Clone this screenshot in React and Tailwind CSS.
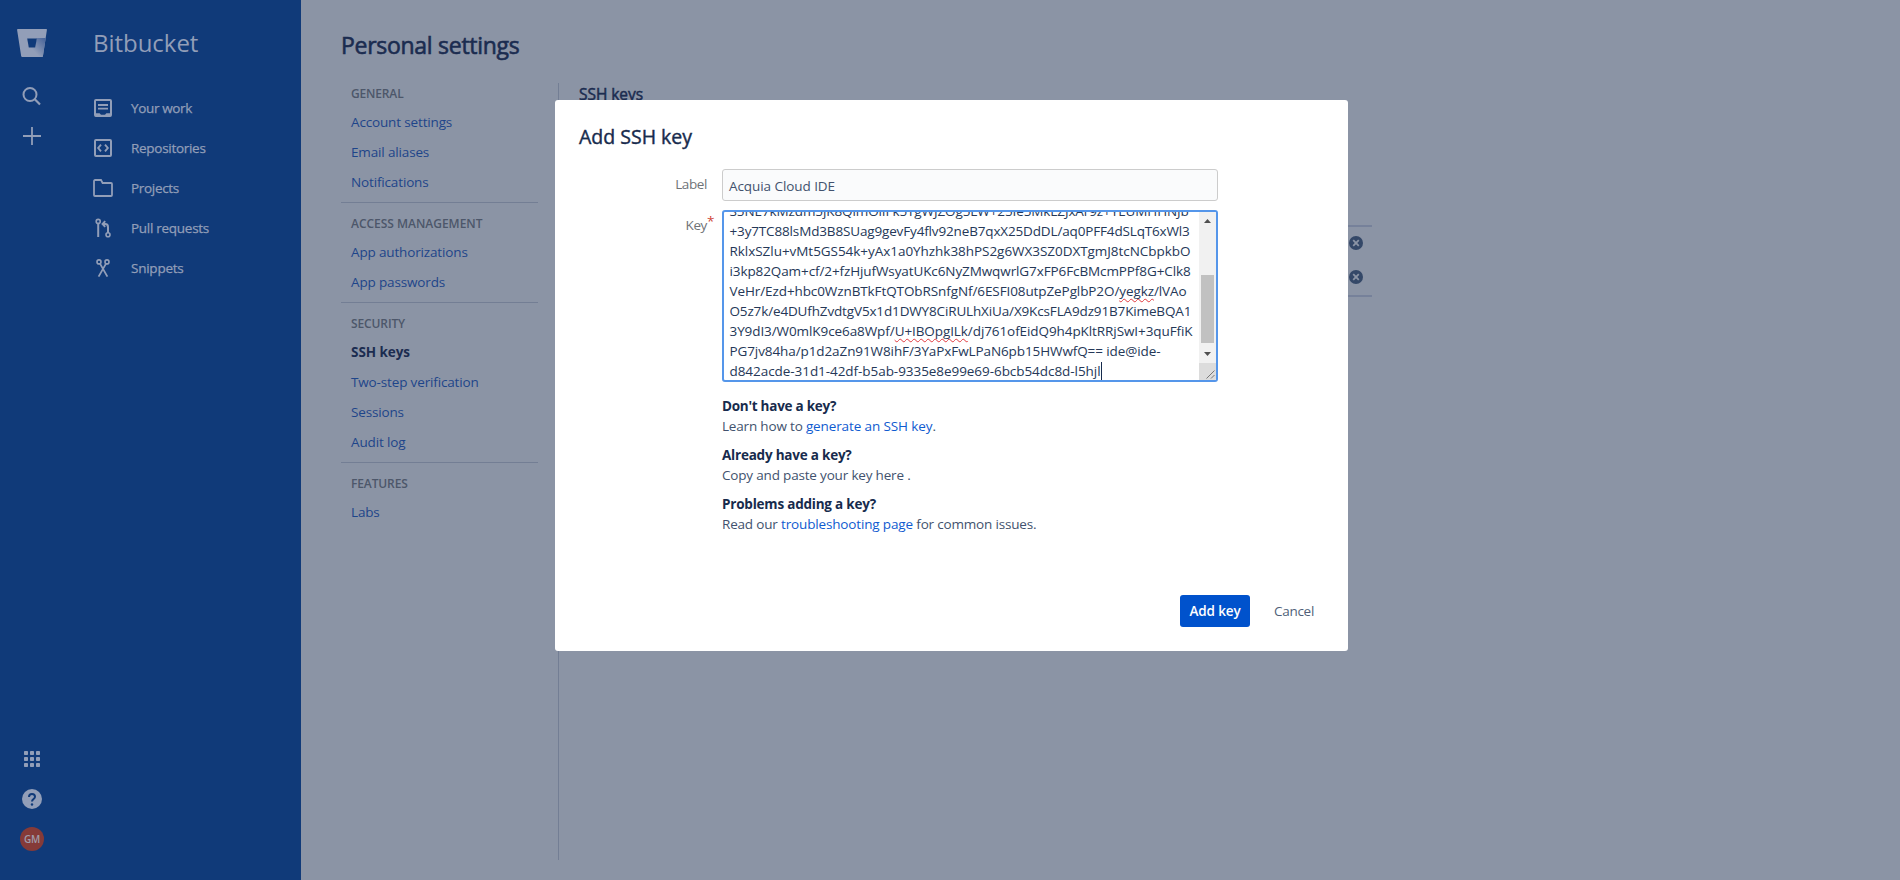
import React from "react";

function Icon({ children, className = "", size = 24 }) {
  return (
    <svg width={size} height={size} viewBox="0 0 24 24" fill="none" stroke="currentColor" strokeWidth="2" className={`shrink-0 ${className}`}>
      {children}
    </svg>
  );
}

const WorkIcon = () => (
  <Icon>
    <rect x="4" y="4" width="16" height="16" rx="1" />
    <path d="M7 9h10M7 12.700h10" strokeWidth="1.800" />
    <path d="M4 17.200h4.500c.6 0 .9 1.600 1.800 1.600h3.400c.9 0 1.200-1.600 1.800-1.600H20v3H4z" fill="currentColor" stroke="none" />
  </Icon>
);

const RepoIcon = () => (
  <Icon>
    <rect x="4" y="4" width="16" height="16" rx="1" />
    <path d="M10 8.700L7.200 12l2.800 3.300M14 8.700l2.800 3.300-2.800 3.300" strokeWidth="1.900" />
  </Icon>
);

const FolderIcon = () => (
  <Icon>
    <path d="M3 19V5.200c0-.7.4-1.200 1.100-1.200H10l1.600 3H20c.6 0 1 .4 1 1v11c0 .6-.4 1-1 1H4c-.6 0-1-.4-1-1z" strokeWidth="1.800" />
  </Icon>
);

const PullIcon = () => (
  <Icon>
    <circle cx="7.200" cy="5.400" r="2" strokeWidth="1.600" />
    <path d="M7.200 7.400V21" />
    <circle cx="17" cy="18.800" r="2" strokeWidth="1.600" />
    <path d="M17 17v-5.800c0-2-1-3.200-2.800-3.200h-2.400" />
    <path d="M14.200 5.200L11.500 8l2.700 2.800" strokeWidth="1.900" />
  </Icon>
);

const SnippetIcon = () => (
  <Icon>
    <circle cx="8" cy="5.900" r="2" strokeWidth="1.600" />
    <circle cx="16" cy="5.900" r="2" strokeWidth="1.600" />
    <path d="M9 7.600L16.400 20.600M15 7.600L7.600 20.600" strokeWidth="1.800" />
  </Icon>
);

function Logo() {
  return (
    <svg width="30" height="28" viewBox="0 0 30 28">
      <defs>
        <linearGradient id="fold" x1="29" y1="9" x2="16" y2="21" gradientUnits="userSpaceOnUse">
          <stop offset="0.1" stopColor="#4a669b" />
          <stop offset="1" stopColor="#929eb8" />
        </linearGradient>
      </defs>
      <path d="M.8 0h28.400c.5 0 .8.4.7.9l-4 26.300c-.1.5-.4.8-.9.8H5.200c-.5 0-.9-.3-1-.8L.1.900C0 .4.300 0 .8 0z" fill="#929eb8" />
      <path d="M19.500 9h9.200l-2.800 18.200c-.1.5-.4.8-.9.8H6l5.600-9.600h6.500z" fill="url(#fold)" />
      <path d="M10.200 9.500h9.600l-1.600 8.900h-6.400z" fill="#103a79" />
    </svg>
  );
}

const NAV = [
  { icon: WorkIcon, label: "Your work", track: "tracking-[-0.35px]" },
  { icon: RepoIcon, label: "Repositories", track: "tracking-[-0.29px]" },
  { icon: FolderIcon, label: "Projects", track: "tracking-[-0.31px]" },
  { icon: PullIcon, label: "Pull requests", track: "tracking-[-0.28px]" },
  { icon: SnippetIcon, label: "Snippets", track: "tracking-[-0.24px]" },
];

const SECTIONS = [
  { title: "General", track: "tracking-[-0.16px]", items: ["Account settings", "Email aliases", "Notifications"] },
  { title: "Access management", track: "tracking-[-0.02px]", items: ["App authorizations", "App passwords"] },
  { title: "Security", track: "tracking-[-0.12px]", items: ["SSH keys", "Two-step verification", "Sessions", "Audit log"] },
  { title: "Features", track: "tracking-[-0.12px]", items: ["Labs"] },
];

const Typo = ({ children }) => (
  <span className="underline decoration-[#e0393e] decoration-wavy decoration-1 underline-offset-[2px] [text-decoration-skip-ink:none]">{children}</span>
);

const KEY_LINES = [
  { track: "tracking-[-0.1px]", text: "S5NE7kMzdm5jK8QimOlIFk5TgWJZOg5LW+25Ie5MkLZJxAr9z+YEUMHHNJb" },
  { track: "tracking-[-0.15px]", text: "+3y7TC88lsMd3B8SUag9gevFy4flv92neB7qxX25DdDL/aq0PFF4dSLqT6xWl3" },
  { track: "tracking-[-0.042px]", text: "RklxSZlu+vMt5GS54k+yAx1a0Yhzhk38hPS2g6WX3SZ0DXTgmJ8tcNCbpkbO" },
  { track: "tracking-[-0.1px]", text: "i3kp82Qam+cf/2+fzHjufWsyatUKc6NyZMwqwrlG7xFP6FcBMcmPPf8G+Clk8" },
  { track: "tracking-[-0.095px]", text: <>VeHr/Ezd+hbc0WznBTkFtQTObRSnfgNf/6ESFI08utpZePglbP2O/<Typo>yegkz</Typo>/lVAo</> },
  { track: "tracking-[-0.145px]", text: "O5z7k/e4DUfhZvdtgV5x1d1DWY8CiRULhXiUa/X9KcsFLA9dz91B7KimeBQA1" },
  { track: "tracking-[-0.084px]", text: <>3Y9dI3/W0mlK9ce6a8Wpf/<Typo>U+IBOpgILk</Typo>/dj761ofEidQ9h4pKltRRjSwI+3quFfiK</> },
  { track: "tracking-[-0.095px]", text: "PG7jv84ha/p1d2aZn91W8ihF/3YaPxFwLPaN6pb15HWwfQ== ide@ide-" },
  { track: "tracking-[-0.056px]", text: "d842acde-31d1-42df-b5ab-9335e8e99e69-6bcb54dc8d-l5hjl", caret: true },
];

function Sidebar() {
  return (
    <aside className="flex w-[301px] shrink-0 bg-[#103a79] text-[#929eb8]">
      <div className="flex w-16 flex-col items-center pb-[29px] pt-[29px]">
        <Logo />
        <svg width="24" height="24" viewBox="0 0 24 24" fill="none" stroke="currentColor" strokeWidth="2" className="mt-[27px]">
          <circle cx="10" cy="10.500" r="6.500" />
          <path d="M14.800 15.300l5.200 5.200" strokeWidth="2.200" />
        </svg>
        <svg width="24" height="24" viewBox="0 0 24 24" stroke="currentColor" strokeWidth="1.800" className="mt-4">
          <path d="M12 3v18M3 12h18" />
        </svg>
        <svg width="16" height="16" viewBox="0 0 16 16" fill="currentColor" className="mt-auto">
          {[0, 6, 12].map((y) => [0, 6, 12].map((x) => <rect key={`${x}-${y}`} x={x} y={y} width="4" height="4" rx="0.700" />))}
        </svg>
        <div className="mt-[22px] flex size-5 items-center justify-center rounded-full bg-[#929eb8] text-[#103a79]">
          <svg width="20" height="20" viewBox="0 0 20 20" fill="none" stroke="currentColor" strokeWidth="2">
            <path d="M7 8c0-1.900 1.300-3 3-3s3 1.100 3 2.800c0 2.200-3 2.200-3 4.700" />
            <circle cx="10" cy="15.500" r="1.200" fill="currentColor" stroke="none" />
          </svg>
        </div>
        <div className="mt-[18px] flex size-6 items-center justify-center rounded-full bg-[#853a38] text-[10px] font-semibold tracking-[-0.2px] text-[#a09cab]">GM</div>
      </div>
      <div className="pl-[27px] pt-[27px]">
        <div className="pl-0.5 text-[24px] leading-8 tracking-[-0.03px]">Bitbucket</div>
        <nav className="mt-[29px]">
          {NAV.map(({ icon: NavIcon, label, track }) => (
            <div key={label} className="flex h-10 items-center gap-4">
              <NavIcon />
              <span className={`text-[13.5px] [-webkit-text-stroke:0.25px_currentColor] ${track}`}>{label}</span>
            </div>
          ))}
        </nav>
      </div>
    </aside>
  );
}

function Settings() {
  return (
    <main className="flex grow flex-col pl-10 text-[#1b2c50]">
      <h1 className="pt-[28px] text-[23px] leading-[34px] tracking-[-0.28px] [-webkit-text-stroke:0.6px_currentColor]">Personal settings</h1>
      <div className="mt-[21px] flex">
        <div className="w-[197px]">
          {SECTIONS.map(({ title, track, items }, i) => (
            <section key={title} className={`px-2.5 ${i ? "border-t border-[#737e94] pt-[7px]" : ""} pb-[5px]`}>
              <h2 className={`flex h-[27px] items-center text-[12px] font-semibold uppercase text-[#4d576a] ${i ? "" : "-mt-[3px]"} ${track}`}>{title}</h2>
              {items.map((item) => (
                <div
                  key={item}
                  className={`h-[30px] text-[13.5px] leading-[30px] ${item === "SSH keys" ? "font-bold tracking-[-0.06px]" : "tracking-[-0.15px] text-[#1e458a]"}`}
                >
                  {item}
                </div>
              ))}
            </section>
          ))}
        </div>
        <div className="ml-5 h-[777px] w-px bg-[#737e94]" />
        <div className="ml-5 w-[793px]">
          <h2 className="text-[15.5px] leading-[22px] tracking-[-0.05px] [-webkit-text-stroke:0.5px_currentColor]">SSH keys</h2>
          <div className="mt-[120px] flex h-[72px] flex-col items-end justify-between border-y-2 border-[#76819a] pb-[11px] pr-[9px] pt-[9px]">
            {[0, 1].map((n) => (
              <svg key={n} width="14" height="14" viewBox="0 0 14 14">
                <circle cx="7" cy="7" r="7" fill="#344868" />
                <path d="M4.200 4.200l5.600 5.600M9.800 4.200L4.200 9.800" stroke="#8b94a5" strokeWidth="1.800" />
              </svg>
            ))}
          </div>
        </div>
      </div>
    </main>
  );
}

function KeyField() {
  return (
    <div className="flex h-[172px] w-[496px] justify-between overflow-hidden rounded-[3px] border-2 border-[#5596ea] bg-white">
      <div className="-mt-[11px] flex flex-col whitespace-nowrap pl-[5.5px] text-[13.5px] leading-5 text-[#253858]">
        {KEY_LINES.map(({ track, text, caret }, i) => (
          <div key={i} className={`flex h-5 shrink-0 items-center ${track}`}>
            <span>{text}</span>
            {caret && <span className="h-[18px] w-px bg-[#172b4d]" />}
          </div>
        ))}
      </div>
      <div className="flex w-[17px] shrink-0 flex-col items-center bg-[#f1f1f1]">
        <svg width="17" height="17" viewBox="0 0 17 17"><path d="M5 11h7L8.500 7z" fill="#505050" /></svg>
        <div className="mt-[46px] h-[68px] w-[13px] bg-[#c1c1c1]" />
        <svg width="17" height="17" viewBox="0 0 17 17" className="mt-[3px]"><path d="M5 6h7L8.500 10z" fill="#505050" /></svg>
        <svg width="17" height="17" viewBox="0 0 17 17" className="bg-[#dcdcdc]">
          <path d="M7.500 15.500l8-8M12 15.500l3.500-3.500" stroke="#777" strokeWidth="1" />
        </svg>
      </div>
    </div>
  );
}

function Modal() {
  return (
    <div className="flex h-[551px] w-[793px] flex-col rounded-[3px] bg-white px-6 pt-[22px] text-[13.5px] text-[#42526e]">
      <h2 className="text-[19.5px] leading-[30px] text-[#172b4d] [-webkit-text-stroke:0.4px_currentColor]">Add SSH key</h2>
      <div className="mt-[17px] flex">
        <label className="w-[128px] pt-[5px] text-right leading-5 tracking-[-0.4px] text-[#6f7377]">Label</label>
        <div className="ml-[15px] flex h-8 w-[496px] items-center rounded-[3px] border border-[#cccccc] bg-[#fafbfc] pl-1.5 pt-[2px] tracking-[-0.07px]">Acquia Cloud IDE</div>
      </div>
      <div className="mt-[9px] flex">
        <label className="flex w-[135px] justify-end pt-[5px] leading-5 tracking-[-0.4px] text-[#6f7377]">
          Key<span className="-mt-1 text-[#d04437]">*</span>
        </label>
        <div className="ml-2">
          <KeyField />
        </div>
      </div>
      <div className="ml-[143px] mt-[14px] leading-5 tracking-[-0.18px]">
        <h3 className="font-bold tracking-[-0.26px] text-[#172b4d]">Don't have a key?</h3>
        <p>Learn how to <a className="tracking-[-0.115px] text-[#0f5bd0]">generate an SSH key</a>.</p>
        <h3 className="mt-[9px] font-bold tracking-[-0.22px] text-[#172b4d]">Already have a key?</h3>
        <p>Copy and paste your key here .</p>
        <h3 className="mt-[9px] font-bold tracking-[-0.21px] text-[#172b4d]">Problems adding a key?</h3>
        <p>Read our <a className="tracking-[-0.15px] text-[#0f5bd0]">troubleshooting page</a> for common issues.</p>
      </div>
      <div className="mb-6 mt-auto flex h-8 items-center justify-end pr-2.5">
        <button className="h-8 w-[70px] rounded-[3px] bg-[#0052cc] font-semibold tracking-[-0.14px] text-white">Add key</button>
        <button className="ml-6 tracking-[-0.29px] text-[#505f79]">Cancel</button>
      </div>
    </div>
  );
}

export default function App() {
  return (
    <div className="relative flex h-[880px] w-[1900px] overflow-hidden bg-[#8b94a5] font-['Open_Sans','Noto_Sans',sans-serif]">
      <Sidebar />
      <Settings />
      <div className="absolute left-[555px] top-[100px]">
        <Modal />
      </div>
    </div>
  );
}
